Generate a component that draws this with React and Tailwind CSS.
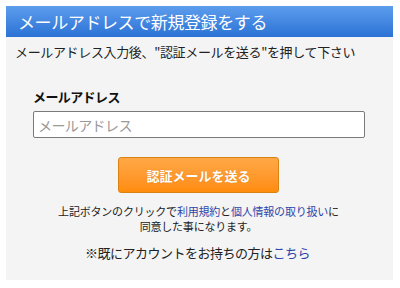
import React from "react";

export default function App() {
  return (
    <div
      className="w-[400px] h-[288px] bg-white p-[6px] pt-[6px]"
      style={{ fontFamily: '"Noto Sans CJK JP", "Noto Sans", sans-serif' }}
    >
      <div className="w-[387px] h-[274px] bg-[#f4f4f4] flex flex-col">
        <div className="h-[31px] flex items-center px-[12px] bg-gradient-to-b from-[#5d9ded] to-[#2a72d5] text-white text-[17px] leading-none tracking-[-0.4px]">
          メールアドレスで新規登録をする
        </div>
        <div className="pl-[9px] pt-[6px] text-[13px] leading-[18px] text-[#222] tracking-[-0.35px]">
          メールアドレス入力後、"認証メールを送る"を押して下さい
        </div>
        <div className="pl-[27px] pt-[27px] text-[13px] leading-[18px] font-bold text-[#111] tracking-[-0.6px]">
          メールアドレス
        </div>
        <div className="pl-[27px] pt-[5px]">
          <input
            className="w-[332px] h-[27px] bg-white border border-[#7a7a7a] rounded-[2px] px-[4px] text-[14px] text-[#333] placeholder-[#999] outline-none tracking-[-0.6px]"
            placeholder="メールアドレス"
            style={{ fontFamily: '"Noto Sans CJK JP", sans-serif' }}
          />
        </div>
        <div className="flex justify-center pt-[19px] pr-[2px]">
          <button
            className="w-[161px] h-[36px] rounded-[3px] border border-[#d9820f] bg-gradient-to-b from-[#ffa845] to-[#ff8c0a] text-white font-bold text-[13px] leading-none"
            style={{ fontFamily: '"Noto Sans CJK JP", sans-serif', textShadow: "0 0 1px rgba(180,90,0,0.5)" }}
          >
            認証メールを送る
          </button>
        </div>
        <div className="pt-[11px] text-center text-[11px] leading-[15px] text-[#222] pr-[2px] tracking-[-0.2px]">
          <div>
            上記ボタンのクリックで<span className="text-[#2d45aa]">利用規約</span>と<span className="text-[#2d45aa]">個人情報の取り扱い</span>に
          </div>
          <div>同意した事になります。</div>
        </div>
        <div className="pt-[10px] text-center text-[13px] leading-[18px] text-[#222] tracking-[-0.5px] pr-[4px]">
          ※既にアカウントをお持ちの方は<span className="text-[#2d45aa]">こちら</span>
        </div>
      </div>
    </div>
  );
}
